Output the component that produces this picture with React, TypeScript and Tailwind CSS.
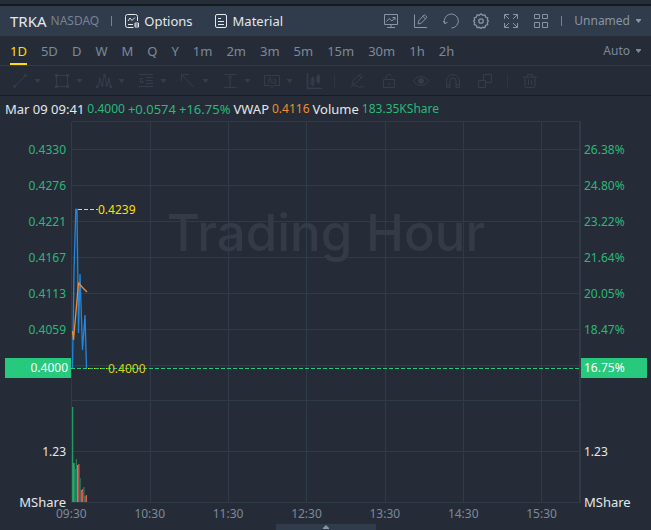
import type { ReactNode } from 'react';

const ranges = ['1D', '5D', 'D', 'W', 'M', 'Q', 'Y', '1m', '2m', '3m', '5m', '15m', '30m', '1h', '2h'];
const prices = ['0.4330', '0.4276', '0.4221', '0.4167', '0.4113', '0.4059'];
const percents = ['26.38%', '24.80%', '23.22%', '21.64%', '20.05%', '18.47%'];
const times = ['09:30', '10:30', '11:30', '12:30', '13:30', '14:30', '15:30'];

const gridX = [79, 157, 235, 314, 392, 470];
const gridY = [28, 64, 100, 136, 172, 208, 244, 279, 330];

// height and direction of every minute bar
const volume: [number, string][] = [
    [95, '#229a63'],
    [39, '#2bc77f'],
    [33, '#229a63'],
    [43, '#1f7d57'],
    [37, '#2bc77f'],
    [38, '#e0524f'],
    [24, '#1f7d57'],
    [12, '#e0524f'],
    [13, '#e0524f'],
    [15, '#1f7d57'],
    [6, '#229a63'],
    [7, '#f0524f'],
];

function Icon({ children }: { children: ReactNode }) {
    return (
        <svg width="16" height="16" viewBox="0 0 16 16" fill="none" stroke="currentColor" strokeWidth="1" className="shrink-0" aria-hidden="true">
            {children}
        </svg>
    );
}

function Caret() {
    return (
        <svg width="5" height="4" viewBox="0 0 5 4" fill="currentColor" className="shrink-0" aria-hidden="true">
            <path d="M0 0h5v1L2.500 4 0 1z" />
        </svg>
    );
}

const headerTools = [
    {
        name: 'Indicators',
        icon: <path d="M1.500 1.500h13v10h-13zM8 11.500v3M4 14.500h8M3.500 8.500l2.500-3 3 2.500 3-3.500M9.500 4.500H12V7" />,
    },
    {
        name: 'Draw',
        icon: <path d="M1.500 1.500v13H14M5 11l.8-3.300 5.500-6 2.700 2.500-5.700 6zM9.800 3.300l2.700 2.500" />,
    },
    {
        name: 'Reset',
        icon: <path d="M1.800 10.500A7 7 0 1 1 8.500 15M.3 8l1.500 2.700L4.500 9.200" />,
    },
    {
        name: 'Settings',
        icon: (
            <>
                <path strokeWidth="1.300" d="M8 .8l1.700 1.400 2.200-.3.700 2.100 2.100.8-.3 2.200L15.400 8l-1 1.500.3 2.200-2.100.8-.7 2.100-2.200-.3L8 15.400l-1.700-1.100-2.200.3-.7-2.100-2.100-.8.3-2.200L.6 8l1-1-.3-2.200 2.100-.8.700-2.100 2.200.3z" />
                <circle cx="8" cy="8" r="2.200" strokeWidth="1.300" />
            </>
        ),
    },
    {
        name: 'Full screen',
        icon: <path d="M1.500 6V1.500H6M1.500 1.500l4.500 4.500M10 1.500h4.500V6M14.500 1.500L10 6M1.500 10v4.500H6M1.500 14.500L6 10M10 14.500h4.500V10M14.500 14.500L10 10" />,
    },
    {
        name: 'Layout',
        icon: <path d="M1.500 1.500h5v4h-5zM9.500 1.500h5v4h-5zM1.500 9.500h5v5h-5zM9.500 9.500h5v5h-5z" />,
    },
];

const shapeTools = [
    {
        name: 'Line',
        icon: (
            <>
                <path d="M3 13L13 3" />
                <circle cx="2.500" cy="13.500" r="1" fill="currentColor" />
                <circle cx="13.500" cy="2.500" r="1" fill="currentColor" />
            </>
        ),
    },
    {
        name: 'Rectangle',
        icon: (
            <>
                <path d="M2.500 2.500h11v11h-11z" />
                <path fill="currentColor" d="M1.500 1.500h2v2h-2zM12.500 1.500h2v2h-2zM1.500 12.500h2v2h-2zM12.500 12.500h2v2h-2z" />
            </>
        ),
    },
    {
        name: 'Wave',
        icon: (
            <>
                <path d="M1.500 14L4 7l2 5 2.500-10L11 12l2-5 1.500 7" />
                <path fill="currentColor" d="M.5 13h1.500v1.500H.5zM3.200 5.500h1.500V7H3.200zM5.500 11.500H7V13H5.500zM7.700 1.500h1.500V3H7.700zM10.200 11.500h1.500V13h-1.500zM12.200 5.500h1.500V7h-1.500zM14 13h1.500v1.500H14z" />
            </>
        ),
    },
    {
        name: 'Levels',
        icon: <path d="M1 1.500h14M8 4.500h7M8 7.500h7M8 10.500h7M1 13.500h14M5 5.500H2.500v4H5v-2" />,
    },
    { name: 'Arrow', icon: <path d="M13.500 14L2 2M1.500 8V1.500H9" /> },
    { name: 'Range', icon: <path d="M1.500 1.500h13M1.500 14.500h13M8 14V3M6 5l2-2.500L10 5" /> },
    {
        name: 'Note',
        icon: (
            <>
                <path d="M.5 2.500h15v10H10L8 14.500l-2-2H.5z" />
                <text x="8" y="10.500" textAnchor="middle" fontSize="8" fill="currentColor" stroke="none">Aa</text>
            </>
        ),
    },
];

const editTools = [
    {
        name: 'Pencil',
        icon: <path d="M3 11l1-3.500L11 1l2.500 2.500-7 7zM9.500 2.500L12 5M1.500 14c3-2 5-2 7-.5 2 1.500 3.500.5 6-.5" />,
    },
    {
        name: 'Lock',
        icon: <path d="M2.500 6.500h11v8h-11zM5 6.500V4C5 .8 10.500.8 11 3.500M8 9.500v2" />,
    },
    {
        name: 'Show',
        icon: (
            <>
                <path d="M.5 8C4.500 2 11.500 2 15.500 8 11.500 14 4.500 14 .5 8z" />
                <circle cx="8" cy="8" r="2.500" fill="currentColor" />
            </>
        ),
    },
    {
        name: 'Magnet',
        icon: <path d="M1.500 14.500V8a6.500 6.500 0 0 1 13 0v6.500h-3.500V8a3 3 0 0 0-6 0v6.500zM1.500 12H5M11 12h3.500" />,
    },
    { name: 'Group', icon: <path d="M6.500 7.500v-6h8v8h-6M1.500 7.500h7v7h-7z" /> },
];

export default function App() {
    return (
        <main className="min-h-screen w-full bg-[#252c37] font-['Noto_Sans',sans-serif] text-[12px] leading-4 text-[#e4e7eb] select-none">
            <div className="h-1 bg-[#242d38]" />
            <header className="flex h-8 items-center border-t-2 border-[#151a20] bg-[#303b4b] px-2.5 text-[13px]">
                <h1 className="text-[15px]">TRKA</h1>
                <span className="ml-1 text-[12px] text-[#778394]">NASDAQ</span>
                <span className="mx-3 h-2.5 w-px bg-[#778394]" />
                <button className="flex items-center gap-1">
                    <Icon>
                        <path d="M9.500 14.500H3.500a2 2 0 0 1-2-2v-9a2 2 0 0 1 2-2h8a2 2 0 0 1 2 2V8M4 11.500h5M4 8l2-3 2 2.500 3-3" />
                        <path d="M11 10h3.500v4H11zM11 12h3.500" />
                    </Icon>
                    Options
                </button>
                <button className="ml-5 flex items-center gap-1">
                    <Icon>
                        <path d="M4 1.500h8a1.500 1.500 0 0 1 1.500 1.500v10a1.500 1.500 0 0 1-1.500 1.500H4a1.500 1.500 0 0 1-1.500-1.500V3A1.500 1.500 0 0 1 4 1.500zM5 5.500h3M5 8.500h6M5 11.500h6" />
                    </Icon>
                    Material
                </button>
                <div className="ml-auto flex items-center gap-3.5 text-[#8995a5]">
                    {headerTools.map((tool) => (
                        <button key={tool.name} aria-label={tool.name}>
                            <Icon>{tool.icon}</Icon>
                        </button>
                    ))}
                </div>
                <span className="mx-3 h-2.5 w-px bg-[#778394]" />
                <button className="flex items-center gap-1.5 text-[12px] text-[#8995a5]">
                    Unnamed <Caret />
                </button>
            </header>

            <nav className="flex h-[30px] items-stretch gap-3.5 border-b border-[#303b48] px-2.5 text-[13px] text-[#7d899a]">
                {ranges.map((range) =>
                    range === '1D' ? (
                        <button key={range} className="border-b-2 border-[#ffde00] pt-0.5 text-[#ffde00]">{range}</button>
                    ) : (
                        <button key={range}>{range}</button>
                    )
                )}
                <button className="ml-auto flex items-center gap-1.5 text-[12px]">
                    Auto <Caret />
                </button>
            </nav>

            <div className="flex h-[30px] items-center border-b border-[#171c23] pl-3 text-[#343e4b]">
                <div className="flex gap-3.5">
                    {shapeTools.map((tool) => (
                        <button key={tool.name} aria-label={tool.name} className="flex items-center gap-[7px]">
                            <Icon>{tool.icon}</Icon>
                            <Caret />
                        </button>
                    ))}
                    <button aria-label="Candles">
                        <Icon>
                            <path strokeWidth="1.500" d="M1.500 0v15.500H16" />
                            <path d="M5 5.500h3v6H5zM6.500 3.500v10" />
                            <path fill="currentColor" d="M11 3h2.500v6H11zM12.500 1v10" />
                        </Icon>
                    </button>
                </div>
                <span className="mr-3.5 ml-3 h-3.5 w-px bg-[#2c3542]" />
                <div className="flex gap-4">
                    {editTools.map((tool) => (
                        <button key={tool.name} aria-label={tool.name}>
                            <Icon>{tool.icon}</Icon>
                        </button>
                    ))}
                </div>
                <span className="mx-3.5 h-3.5 w-px bg-[#2c3542]" />
                <button aria-label="Delete">
                    <Icon>
                        <path d="M1 4h14M3 4v9.500q0 1 1 1h8q1 0 1-1V4M5.500 4V1.500h5V4M6.500 6.500v5.500M9.500 6.500v5.500" />
                    </Icon>
                </button>
            </div>

            <p className="flex h-[25px] items-center gap-[3px] px-[5px] text-[13px] whitespace-nowrap">
                <span>Mar 09 09:41</span>
                <span className="text-[12px] text-[#2bb878]">0.4000</span>
                <span className="text-[#2bb878]">+0.0574</span>
                <span className="text-[#2bb878]">+16.75%</span>
                <span>VWAP</span>
                <span className="text-[12px] text-[#ef8c2f]">0.4116</span>
                <span>Volume</span>
                <span className="text-[12px] text-[#2bb878]">183.35KShare</span>
            </p>

            <section className="flex items-start">
                <div className="w-[71px] shrink-0 pt-[11px] pl-[5px] text-right">
                    {prices.map((price) => (
                        <div key={price} className="flex h-9 items-center justify-end pr-[5px] text-[#2bb878]">{price}</div>
                    ))}
                    <div className="mt-2.5 flex h-5 items-center justify-end bg-[#27c97d] pr-[3px] text-white">0.4000</div>
                    <div className="mt-[66px] pr-[5px]">1.23</div>
                    <div className="mt-9 pr-[5px] text-[13px] leading-3">MShare</div>
                </div>

                <div className="relative h-[382px] min-w-0 flex-1">
                    <div className="absolute inset-x-0 top-[76px] text-center font-['Inter',sans-serif] text-[51px] leading-[72px] font-medium whitespace-nowrap text-[#343b47]">
                        Trading Hour
                    </div>
                    <svg className="absolute inset-0 h-full w-full" viewBox="0 0 510 382" preserveAspectRatio="none" fill="none" aria-hidden="true">
                        <g stroke="#303b48" shapeRendering="crispEdges">
                            {gridX.map((x) => (
                                <path key={x} d={`M${x + 0.5} 0V382`} />
                            ))}
                            {gridY.map((y) => (
                                <path key={y} d={`M0 ${y + 0.5}H510`} />
                            ))}
                            <path d="M0.500 0.500V381.500H509M0.500 0.500H509" />
                            <path d="M509 0V382" strokeWidth="2" />
                        </g>
                        <path d="M1 247L5.500 89L8 212L9 153L11.500 228L14 194L15.500 247Z" fill="#2185d0" fillOpacity=".08" />
                        <path d="M1.500 247L3 150L4.800 88.500H6L7.500 212L9 153L11.500 229L14 194L15.500 247" stroke="#2386de" strokeWidth="1.300" />
                        <path d="M1.500 210L2.500 219L7.500 162L12 167L16 171" stroke="#ef8c2f" strokeWidth="1.300" />
                        <path d="M7 88.500H27" stroke="#ffde00" strokeDasharray="4 2" shapeRendering="crispEdges" />
                        <path d="M17 247.500H37" stroke="#ffde00" strokeDasharray="4 2" shapeRendering="crispEdges" />
                        <path d="M0 247.500H509" stroke="#27c97d" strokeDasharray="4 2" shapeRendering="crispEdges" />
                        {volume.map(([height, color], i) => (
                            <rect key={i} x={1 + i * 1.25} y={381 - height} width="1.300" height={height} fill={color} />
                        ))}
                    </svg>
                    <span className="absolute top-[81px] left-[27px] text-[#ffde00]">0.4239</span>
                    <span className="absolute top-60 left-[37px] text-[#d8cf17]">0.4000</span>
                </div>

                <div className="w-[70px] shrink-0 pt-[11px] pr-1">
                    {percents.map((percent) => (
                        <div key={percent} className="flex h-9 items-center pl-[3px] text-[#2bb878]">{percent}</div>
                    ))}
                    <div className="mt-2.5 flex h-5 items-center bg-[#27c97d] pl-[3px] text-white">16.75%</div>
                    <div className="mt-[66px] pl-[3px]">1.23</div>
                    <div className="mt-9 pl-[3px] text-[13px] leading-3">MShare</div>
                </div>
            </section>

            <div className="flex justify-between pr-[94px] pl-[56px] leading-3 text-[#7d899a]">
                {times.map((time) => (
                    <span key={time}>{time}</span>
                ))}
            </div>
            <button aria-label="Expand panel" className="mx-auto mt-1 flex h-1.5 w-[100px] items-center justify-center bg-[#303b4b] text-[#8995a5]">
                <svg width="6" height="4" viewBox="0 0 6 4" fill="currentColor" aria-hidden="true">
                    <path d="M0 4h6V3L3 0 0 3z" />
                </svg>
            </button>
        </main>
    );
}
